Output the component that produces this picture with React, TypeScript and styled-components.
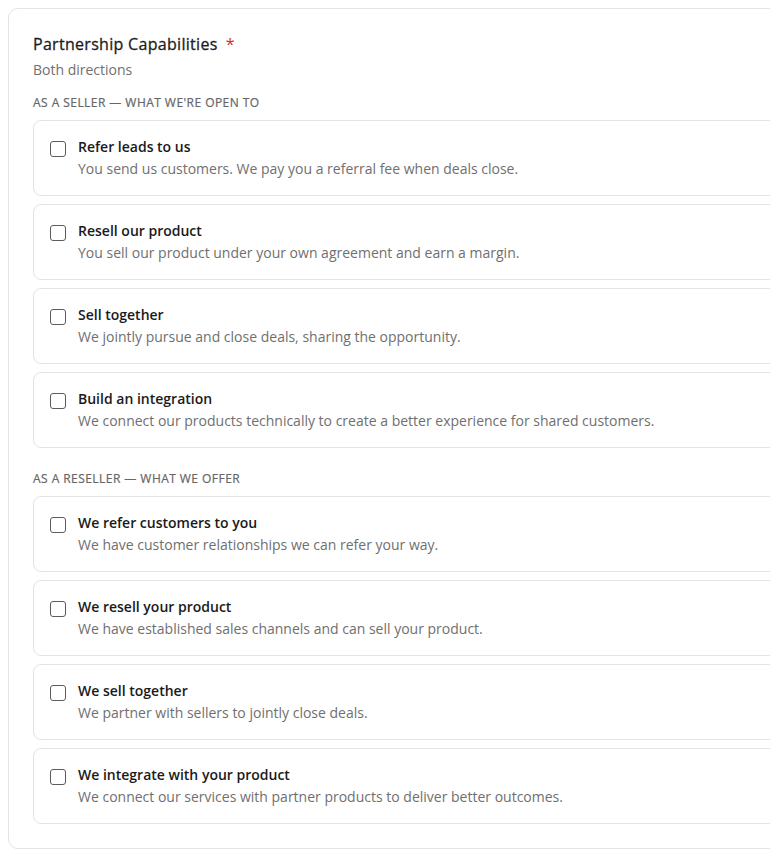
import React from "react";
import styled, { createGlobalStyle } from "styled-components";

const Global = createGlobalStyle`
  html, body { margin: 0; padding: 0; background: #ffffff; overflow: hidden; }
  body { padding: 8px; font-family: "Open Sans", "Noto Sans", sans-serif; color: #1f1f1f; }
  * { box-sizing: border-box; }
`;

const Panel = styled.section`
  width: 820px;
  border: 1px solid #e3e3e3;
  border-radius: 10px;
  padding: 24px;
  background: #fff;
`;

const Title = styled.h2`
  margin: 0;
  font-size: 16px;
  line-height: 22px;
  font-weight: 500;
  letter-spacing: 0.3px;
  -webkit-text-stroke: 0.3px currentColor;
  color: #1c1c1c;
  display: flex;
  align-items: baseline;
  gap: 8px;
`;

const Required = styled.span`
  color: #d92d20;
  -webkit-text-stroke: 0;
`;

const Subtitle = styled.p`
  margin: 5px 0 15px;
  font-size: 14px;
  line-height: 20px;
  color: #6f6f6f;
`;

const Group = styled.div<{ $first?: boolean }>`
  margin-top: ${(p) => (p.$first ? "0" : "23px")};
`;

const GroupLabel = styled.div`
  font-size: 12px;
  line-height: 16px;
  font-weight: 500;
  color: #666666;
  text-transform: uppercase;
  letter-spacing: 0.45px;
  -webkit-text-stroke: 0.2px currentColor;
  margin-bottom: 9px;
`;

const List = styled.div`
  display: flex;
  flex-direction: column;
  gap: 8px;
`;

const OptionCard = styled.label`
  display: flex;
  align-items: flex-start;
  gap: 12px;
  border: 1px solid #e3e3e3;
  border-radius: 8px;
  padding: 16px;
  cursor: pointer;
  background: #fff;
`;

const Box = styled.span`
  flex: none;
  width: 16px;
  height: 16px;
  margin-top: 4px;
  border: 1.5px solid #5c5c5c;
  border-radius: 3px;
  background: #fff;
`;

const Texts = styled.div`
  display: flex;
  flex-direction: column;
  gap: 2px;
`;

const OptionTitle = styled.span`
  font-size: 14px;
  line-height: 20px;
  font-weight: 600;
  color: #1a1a1a;
`;

const OptionDesc = styled.span`
  font-size: 14px;
  line-height: 20px;
  color: #6f6f6f;
`;

type Opt = { title: string; desc: string };

const seller: Opt[] = [
  { title: "Refer leads to us", desc: "You send us customers. We pay you a referral fee when deals close." },
  { title: "Resell our product", desc: "You sell our product under your own agreement and earn a margin." },
  { title: "Sell together", desc: "We jointly pursue and close deals, sharing the opportunity." },
  { title: "Build an integration", desc: "We connect our products technically to create a better experience for shared customers." },
];

const reseller: Opt[] = [
  { title: "We refer customers to you", desc: "We have customer relationships we can refer your way." },
  { title: "We resell your product", desc: "We have established sales channels and can sell your product." },
  { title: "We sell together", desc: "We partner with sellers to jointly close deals." },
  { title: "We integrate with your product", desc: "We connect our services with partner products to deliver better outcomes." },
];

function Option({ o }: { o: Opt }) {
  return (
    <OptionCard>
      <Box />
      <Texts>
        <OptionTitle>{o.title}</OptionTitle>
        <OptionDesc>{o.desc}</OptionDesc>
      </Texts>
    </OptionCard>
  );
}

export default function App() {
  return (
    <>
      <Global />
      <Panel>
        <Title>
          Partnership Capabilities <Required>*</Required>
        </Title>
        <Subtitle>Both directions</Subtitle>
        <Group $first>
          <GroupLabel>As a seller — what we're open to</GroupLabel>
          <List>
            {seller.map((o) => (
              <Option key={o.title} o={o} />
            ))}
          </List>
        </Group>
        <Group>
          <GroupLabel>As a reseller — what we offer</GroupLabel>
          <List>
            {reseller.map((o) => (
              <Option key={o.title} o={o} />
            ))}
          </List>
        </Group>
      </Panel>
    </>
  );
}
